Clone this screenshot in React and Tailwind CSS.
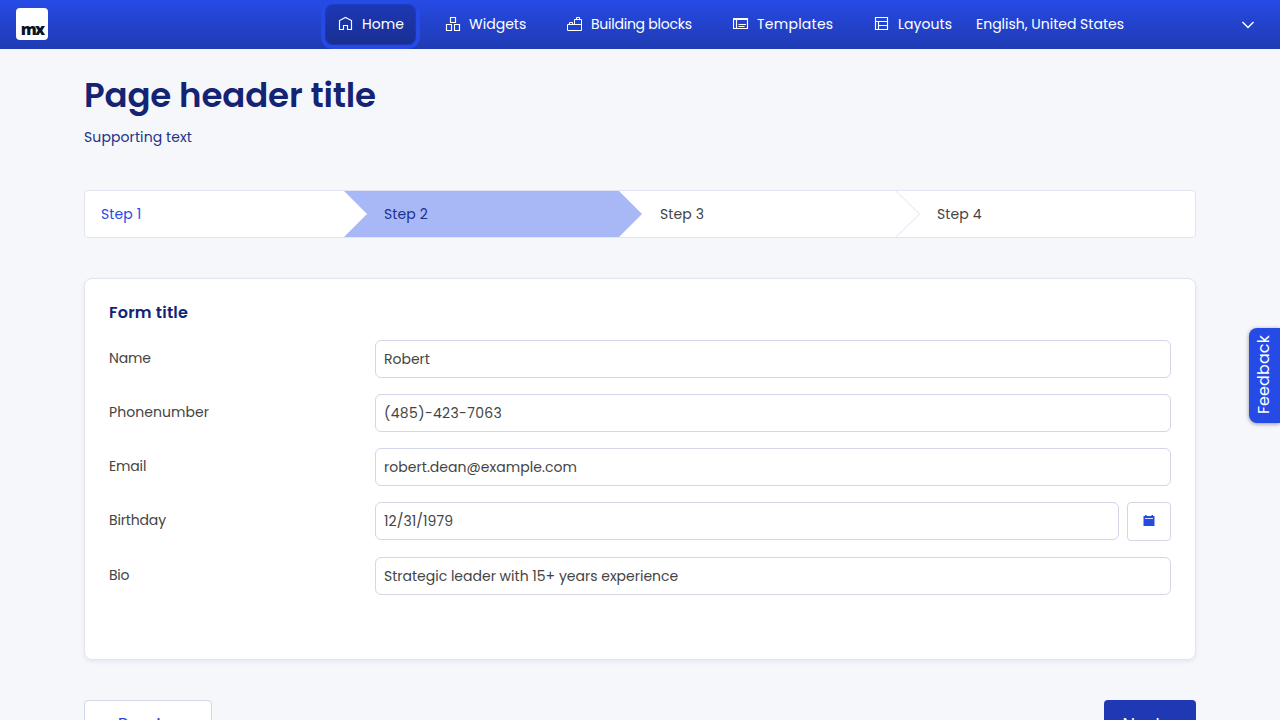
import React from "react";

const Icon = ({ children }) => (
  <svg width="16" height="16" viewBox="0 0 16 16" fill="none" stroke="currentColor" strokeWidth="1" className="shrink-0">
    {children}
  </svg>
);

const HomeIcon = () => (
  <Icon><path strokeWidth="1.150" d="M1.5 13.5V4.500L7.500 1.500l6 3v9h-4v-4h-4v4z" /></Icon>
);
const WidgetsIcon = () => (
  <Icon><path strokeWidth="1.150" d="M5.500 1.500h5v5h-5zM1.500 8.500h5v6h-5zM9.500 8.500h5v6h-5z" /></Icon>
);
const BlocksIcon = () => (
  <Icon><path d="M.5 8.500v6h14v-11h-7v5zM7.500 8.500h7M9.500 3.500v-2h3v2M2.500 8.500v-2h3v2" /></Icon>
);
const TemplatesIcon = () => (
  <Icon><path strokeWidth="1.150" d="M.5 2.500h14v10H.5zM.5 3.500h14M3.500 4v8.500M5.500 8.500h7.500M5.500 10.500h6" /></Icon>
);
const LayoutsIcon = () => (
  <Icon><path strokeWidth="1.150" d="M1.500 1.500h12v12h-12zM1.500 5.500h12M4.500 5.500v8M4.500 9.500h9" /></Icon>
);

const navItems = [
  { label: "Home", icon: HomeIcon, box: "w-[91px] rounded-lg bg-linear-to-b from-[#1c38b5] to-[#192f91] shadow-[0_0_0_4px_#264ae5,inset_0_0_2px_#264ae5]", text: "tracking-[0.1px]" },
  { label: "Widgets", icon: WidgetsIcon, box: "w-[106px]", text: "tracking-[0.03px]" },
  { label: "Building blocks", icon: BlocksIcon, box: "w-[150px]", text: "tracking-[-0.24px]" },
  { label: "Templates", icon: TemplatesIcon, box: "w-[125px]", text: "tracking-[0.25px]" },
  { label: "Layouts", icon: LayoutsIcon, box: "w-[103px]", text: "tracking-[0.05px]" },
];

const fields = [
  { label: "Name", value: "Robert", labelText: "tracking-[-0.15px]", valueText: "tracking-[0px]" },
  { label: "Phonenumber", value: "(485)-423-7063", labelText: "tracking-[0.05px]", valueText: "tracking-[0.35px]" },
  { label: "Email", value: "robert.dean@example.com", labelText: "tracking-[-0.15px]", valueText: "tracking-[0.04px]" },
  { label: "Birthday", value: "12/31/1979", labelText: "tracking-[-0.15px]", valueText: "tracking-[0.08px]", date: true },
  { label: "Bio", value: "Strategic leader with 15+ years experience", labelText: "tracking-[-0.3px]", valueText: "tracking-[0px]" },
];

function Steps() {
  return (
    <div className="mt-[42px] grid h-12 grid-cols-[259px_275px_277px_1fr] rounded border border-[#e2e4f1] bg-white tracking-[0.12px]">
      <div className="flex items-center pl-4 text-[#264ae5]">
        <span>Step 1</span>
      </div>
      <div className="relative flex items-center bg-[#a8b7f6] pl-10 text-[#1c318c]">
        <svg className="absolute top-0 left-0" width="24" height="46" viewBox="0 0 24 46"><path d="M0 0 23 23 0 46z" fill="white" /></svg>
        <span>Step 2</span>
      </div>
      <div className="relative flex items-center pl-[41px]">
        <svg className="absolute top-0 left-0" width="24" height="46" viewBox="0 0 24 46"><path d="M0 0 23 23 0 46z" fill="#a8b7f6" /></svg>
        <span>Step 3</span>
      </div>
      <div className="relative flex items-center pl-[41px]">
        <svg className="absolute top-0 left-0" width="24" height="46" viewBox="0 0 24 46"><path d="M0 0 23.500 23 0 46" fill="none" stroke="#eeeff6" strokeWidth="1.300" /></svg>
        <span>Step 4</span>
      </div>
    </div>
  );
}

export default function App() {
  return (
    <div className="relative h-screen overflow-hidden bg-[#f6f7fb] font-['Poppins','Inter',sans-serif] text-[14px] leading-[20px] text-[#444] [font-feature-settings:'cv11']">
      <header className="flex h-[49px] items-start bg-linear-to-b from-[#264ae5] to-[#1f3bb3] pt-1 text-white">
        <div className="mt-1 ml-4 flex h-8 w-8 items-end justify-center rounded bg-white pb-[2px] font-['Open_Sans',sans-serif] text-[16px] leading-[18px] font-extrabold tracking-[-1.8px] text-[#0a1325]">
          mx
        </div>
        <nav className="ml-[277px] flex gap-4">
          {navItems.map(({ label, icon: I, box, text }) => (
            <a key={label} className={"flex h-[41px] items-start gap-2 pt-3 pl-[13px] whitespace-nowrap " + box}>
              <I />
              <span className={"-mt-[2px] " + text}>{label}</span>
            </a>
          ))}
        </nav>
        <span className="mt-[10px] ml-3 flex-1">English, United States</span>
        <svg className="mt-[17px] mr-[25px]" width="14" height="8" viewBox="0 0 14 8" fill="none" stroke="white" strokeWidth="1.500"><path d="m1.500 1 5.500 5.500L12.500 1" /></svg>
      </header>

      <main className="mx-auto w-[1112px]">
        <h1 className="pt-[24px] text-[34px] leading-[44px] font-semibold tracking-[-0.15px] text-[#142474]">Page header title</h1>
        <p className="mt-[9px] leading-[22px] tracking-[0.1px] text-[#1c318c]">Supporting text</p>
        <Steps />

        <section className="mt-10 h-[382px] rounded-lg border border-[#e2e4f1] bg-white px-6 pt-6 shadow-[0_2px_4px_rgba(40,60,150,0.08)]">
          <h2 className="text-[16px] leading-[20px] font-semibold tracking-[0.22px] text-[#142474]">Form title</h2>
          <div className="mt-[17px] flex flex-col gap-4">
            {fields.map((f) => (
              <div key={f.label} className="flex items-start">
                <label className={"w-[266px] pt-2 " + f.labelText}>{f.label}</label>
                <div className={"flex h-[38px] flex-1 items-center rounded-md border border-[#d3d5e9] bg-white pl-2 " + f.valueText}>{f.value}</div>
                {f.date && (
                  <button aria-label="Pick a date" className="ml-2 flex h-[39px] w-11 items-start justify-center rounded border border-[#d3d5e9] bg-white pt-[11px]">
                    <svg width="12" height="12" viewBox="0 0 12 12"><path d="M.5 2h1.500V1h1.500v1h5v-1H10v1h1.500v10H.5z" fill="#264ae5" /><path d="M2 4.500h8" stroke="#d8defa" /></svg>
                  </button>
                )}
              </div>
            ))}
          </div>
        </section>

        <div className="mt-10 flex justify-between text-[18px] leading-[26px]">
          <button className="h-[50px] w-32 rounded border border-[#d3d5e9] bg-white pl-[15px] text-[#264ae5]">Previous</button>
          <button className="h-[50px] w-[92px] rounded bg-[#1e39b3] pr-4 text-white">Next</button>
        </div>
      </main>

      <button className="absolute top-[328px] right-0 flex h-[95px] w-[31px] items-center justify-center rounded-l-lg bg-[#264ae5] pr-[2px] pb-px text-[16px] text-white shadow-[0_1px_4px_rgba(0,0,0,0.4)]">
        <span className="rotate-180 tracking-[0.1px] [writing-mode:vertical-rl]">Feedback</span>
      </button>
    </div>
  );
}
